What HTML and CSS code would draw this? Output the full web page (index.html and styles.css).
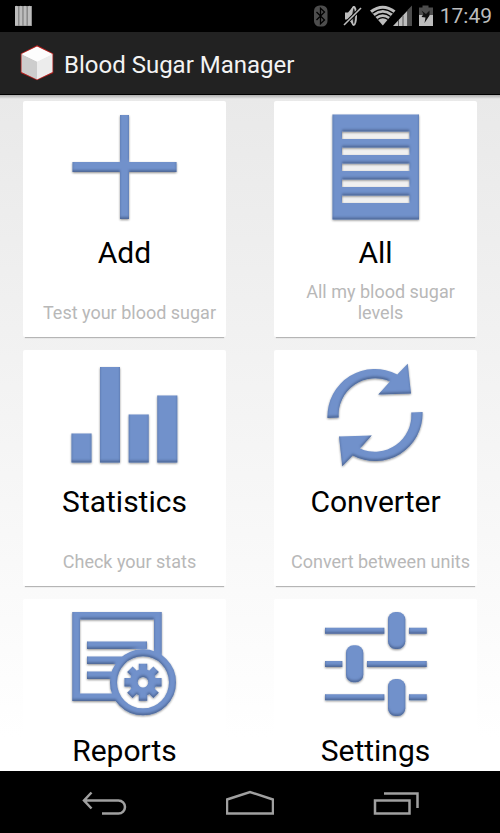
FILE: index.html
```html
<!DOCTYPE html>
<html lang="en">
<head>
<meta charset="utf-8">
<meta name="viewport" content="width=device-width, initial-scale=1">
<title>Blood Sugar Manager</title>
<link rel="stylesheet" href="styles.css">
</head>
<body>
<svg class="defs" width="0" height="0" aria-hidden="true">
  <filter id="bevel" x="-10%" y="-10%" width="120%" height="125%">
    <feOffset in="SourceAlpha" dy="-2" result="up"/>
    <feGaussianBlur in="up" stdDeviation="0.8" result="upSoft"/>
    <feComposite in="SourceAlpha" in2="upSoft" operator="out" result="edge"/>
    <feFlood flood-color="#31466f" flood-opacity="0.65"/>
    <feComposite in2="edge" operator="in" result="edgeTint"/>
    <feGaussianBlur in="SourceAlpha" stdDeviation="1.2"/>
    <feOffset dy="1"/>
    <feComponentTransfer result="drop"><feFuncA type="linear" slope="0.45"/></feComponentTransfer>
    <feMerge>
      <feMergeNode in="drop"/>
      <feMergeNode in="SourceGraphic"/>
      <feMergeNode in="edgeTint"/>
    </feMerge>
  </filter>
</svg>

<div class="status">
  <svg width="18" height="24" viewBox="0 0 18 24" aria-hidden="true">
    <path fill="#8a8a8a" d="M0 2h17v20H0z"/>
    <path fill="#bdbdbd" d="M0 2.5l1.5-.8 1.5.8v19H0zM4.5 2.5l1.3-.8 1.4.8v19H4.5zM8.7 2.5l1.3-.8 1.4.8v19H8.7zM13 2.5l1.5-.8 1.6.8v19H13z"/>
  </svg>
  <div class="status-right">
    <svg width="24" height="24" viewBox="0 0 24 24" aria-hidden="true">
      <rect x="2" y="1.5" width="13.5" height="21" rx="5.5" fill="#4d4d4d"/>
      <path fill="none" stroke="#000" stroke-width="1.3" d="M4.500 8l8 8-4 3.800V4.200l4 3.800-8 8"/>
    </svg>
    <svg width="22" height="24" viewBox="0 0 22 24" aria-hidden="true">
      <path fill="#bdbdbd" d="M3 8.500h3l5.500-6.500h1v19h-1L6 15.500H3z"/>
      <ellipse cx="11.800" cy="12" rx="2.300" ry="9" fill="#222" stroke="#bdbdbd" stroke-width="1.800"/>
      <path stroke="#000" stroke-width="3.600" d="M2.500 20.500L18.500 4.500"/>
      <path stroke="#bdbdbd" stroke-width="1.600" d="M2 21L19 4"/>
    </svg>
    <svg width="42" height="24" viewBox="0 0 42 24" aria-hidden="true">
      <path fill="#bdbdbd" d="M0 6.500Q12.800-3 25.500 6.500L12.800 21.500z"/>
      <path fill="none" stroke="#000" stroke-width="1.300" d="M2.500 9.200Q12.800 1.500 23.200 9.200M5 12.500Q12.800 6.500 20.500 12.500M7.600 15.600Q12.800 11.500 18 15.600"/>
      <path fill="#bdbdbd" d="M23 22L37.500 6.500V22z"/>
      <path fill="#4d4d4d" d="M37.500 6L42 1.500V22h-4.500z"/>
      <path stroke="#555" stroke-width="1" d="M28.500 16v6M33 11.500V22"/>
    </svg>
    <svg width="16" height="24" viewBox="0 0 16 24" aria-hidden="true">
      <path fill="#4d4d4d" d="M1 3.500h3.500v-2h6v2H15V12H1z"/>
      <path fill="#bdbdbd" d="M1 11h14v11H1z"/>
      <path fill="#111" d="M3.500 6.500l4.500 3.500 3.500-3.500v5l-5 7.500 1-5.500-4-.5 2-3z"/>
    </svg>
    <time>17:49</time>
  </div>
</div>

<header class="bar">
  <svg width="34" height="36" viewBox="0 0 34 36" aria-hidden="true">
    <path fill="#fff" stroke="#b3211f" stroke-width="1.500" d="M17 1L32.500 9v18.500L17 34.500 1.500 27.500V9z"/>
    <path fill="#cdcdcd" d="M1.500 9L17 16.500v18L1.500 27z"/>
    <path fill="#ececec" d="M32.500 9L17 16.500v18L32.500 27z"/>
    <path fill="#fdfdfd" d="M17 1.500L32.500 9 17 16.500 1.500 9z"/>
  </svg>
  <h1>Blood Sugar Manager</h1>
</header>

<main class="grid">
  <a class="card" href="#add">
    <svg class="art" viewBox="0 0 121 134" aria-hidden="true"><g filter="url(#bevel)">
      <path d="M56 14h9v47h47.500v10H65v47h-9V71H8.500V61H56z"/>
    </g></svg>
    <h2>Add</h2>
    <p>Test your blood sugar</p>
  </a>
  <a class="card" href="#all">
    <svg class="art" viewBox="0 0 121 134" aria-hidden="true">
      <path class="paper" d="M20 20h80v90H20z"/>
      <g filter="url(#bevel)">
      <path fill-rule="evenodd" d="M17.500 13.500H104v105H17.500zM27 30.500V38h67.500v-7.500zM27 46.500V54h67.500v-7.500zM27 62.500V70h67.500v-7.500zM27 78.500V86h67.500v-7.500zM27 94.500v7.500h67.500v-7.500z"/>
    </g></svg>
    <h2>All</h2>
    <p>All my blood sugar levels</p>
  </a>
  <a class="card" href="#statistics">
    <svg class="art" viewBox="0 0 121 134" aria-hidden="true"><g filter="url(#bevel)">
      <path d="M7.500 83.500h20v29h-20zM36 17h20v95.500H36zM64.700 64.500h20v48h-20zM93.300 45.500h20v67h-20z"/>
    </g></svg>
    <h2>Statistics</h2>
    <p>Check your stats</p>
  </a>
  <a class="card" href="#converter">
    <svg class="art" viewBox="0 0 121 134" aria-hidden="true"><g filter="url(#bevel)">
      <path d="M12.500 68A47.500 47.500 0 0 1 82.300 24.500L92.700 13.700 96 43.500 63.300 44.500 75 31.500A36.500 36.500 0 0 0 23.700 67.500z"/>
      <path d="M107.500 62A47.500 47.500 0 0 1 37.700 105.500L27.300 116.300 24 86.500 56.700 85.500 45 98.500A36.500 36.500 0 0 0 96.300 62.500z"/>
    </g></svg>
    <h2>Converter</h2>
    <p>Convert between units</p>
  </a>
  <a class="card" href="#reports">
    <svg class="art" viewBox="0 0 121 134" aria-hidden="true">
      <mask id="page">
        <path fill="#fff" d="M0 0h121v134H0z"/>
        <circle cx="79" cy="83.300" r="30" fill="#000"/>
      </mask>
      <mask id="hub" maskUnits="userSpaceOnUse" x="-20" y="-20" width="40" height="40">
        <path fill="#fff" d="M-20-20h40v40h-40z"/>
        <circle r="6" fill="#000"/>
      </mask>
      <g filter="url(#bevel)">
        <g mask="url(#page)">
          <path fill-rule="evenodd" d="M8.300 13h89.400v89H8.300zM16 20.500V94.500H90V20.500z"/>
          <path d="M23 42.500h60V50H23zM23 57.500h50V65H23zM23 72.500h40V80H23z"/>
        </g>
        <circle class="ring" cx="79" cy="83.300" r="29.500"/>
        <g transform="translate(79 83.300)">
          <path d="M-4.200-18.500h8.400V18.500h-8.400z" mask="url(#hub)"/>
          <path d="M-18.500-4.200h37v8.400h-37z" mask="url(#hub)"/>
          <path d="M-3.800-18.500h7.600v37h-7.600z" transform="rotate(45)" mask="url(#hub)"/>
          <path d="M-3.800-18.500h7.600v37h-7.600z" transform="rotate(-45)" mask="url(#hub)"/>
          <circle class="gear" r="9.300"/>
        </g>
      </g>
    </svg>
    <h2>Reports</h2>
  </a>
  <a class="card" href="#settings">
    <svg class="art" viewBox="0 0 121 134" aria-hidden="true"><g filter="url(#bevel)">
      <path d="M10 28.700h59.300v6H10zM94 28.700h17.700v6H94zM10 62h17.300v6H10zM52 62h59.700v6H52zM10 95.300h59.300v6H10zM94 95.300h17.700v6H94z"/>
      <rect x="73" y="13" width="17.300" height="37" rx="7.500"/>
      <rect x="31" y="46.300" width="17.300" height="37" rx="7.500"/>
      <rect x="73" y="80" width="17.300" height="37" rx="7.500"/>
    </g></svg>
    <h2>Settings</h2>
  </a>
</main>

<nav class="nav">
  <button type="button" aria-label="Back"><svg width="48" height="32" viewBox="0 0 48 32"><path d="M11.500 6.500L4 14.500l7.500 8M4 14.500h34.500a6.500 6.500 0 0 1 0 13H22"/></svg></button>
  <button type="button" aria-label="Home"><svg width="48" height="32" viewBox="0 0 48 32"><path d="M1 13.500L24 6l23 7.500v14H1z"/></svg></button>
  <button type="button" aria-label="Recent apps"><svg width="48" height="32" viewBox="0 0 48 32"><path d="M3 14.500h34.500v13H3zM12 7.500h33.500V22"/></svg></button>
</nav>
</body>
</html>
```
FILE: styles.css
```css
* {
  box-sizing: border-box;
}

body {
  margin: 0;
  height: 100vh;
  display: flex;
  flex-direction: column;
  overflow: hidden;
  font-family: Roboto, "Liberation Sans", sans-serif;
  background: #000;
}

h1, h2, p {
  margin: 0;
  font-weight: 400;
}

svg {
  display: block;
}

.defs {
  position: absolute;
}

.status {
  flex: none;
  display: flex;
  justify-content: space-between;
  align-items: center;
  height: 32px;
  padding: 0 8px 0 15px;
  color: #bdbdbd;
}

.status-right {
  display: flex;
  align-items: center;
  gap: 6px;
  font-size: 21px;
  line-height: 32px;
}

.bar {
  flex: none;
  display: flex;
  align-items: center;
  gap: 10px;
  height: 63px;
  padding: 0 20px;
  background: #222;
  border-bottom: 1px solid #000;
  color: #f3f3f3;
}

.bar h1 {
  padding-top: 3px;
  font-size: 24px;
  line-height: 32px;
}

.grid {
  flex: 1;
  min-height: 0;
  overflow: hidden;
  display: grid;
  grid-template-columns: 1fr 1fr;
  grid-auto-rows: 236px;
  gap: 13px 48px;
  padding: 6px 23px 0;
  background:
    linear-gradient(rgba(0, 0, 0, 0.25), transparent) top / 100% 4px no-repeat,
    linear-gradient(#e9e9e9, #fff 95%);
}

.card {
  display: flex;
  flex-direction: column;
  align-items: center;
  padding-bottom: 14px;
  border-radius: 2px;
  background: #fff;
  box-shadow: 0 3px 1px -2px #b5b5b5;
  color: #000;
  text-decoration: none;
}

.art {
  flex: none;
  width: 121px;
  height: 134px;
  fill: #7191cb;
}

.art .paper {
  fill: #f0f0f0;
}

.art .ring {
  fill: none;
  stroke: #7191cb;
  stroke-width: 7px;
}

.art .gear {
  fill: none;
  stroke: #7191cb;
  stroke-width: 8px;
}

.card h2 {
  font-size: 30px;
  line-height: 36px;
}

.card p {
  width: 100%;
  margin-top: auto;
  padding-left: 10px;
  font-size: 18px;
  line-height: 21px;
  color: #b8b8b8;
  text-align: center;
}

.nav {
  flex: none;
  display: grid;
  grid-template-columns: repeat(3, 1fr);
  height: 62px;
  padding: 0 31px;
}

.nav button {
  display: grid;
  place-items: center;
  padding: 0;
  border: 0;
  background: none;
}

.nav svg {
  fill: none;
  stroke: #a0a0a0;
  stroke-width: 2.5px;
}
```
